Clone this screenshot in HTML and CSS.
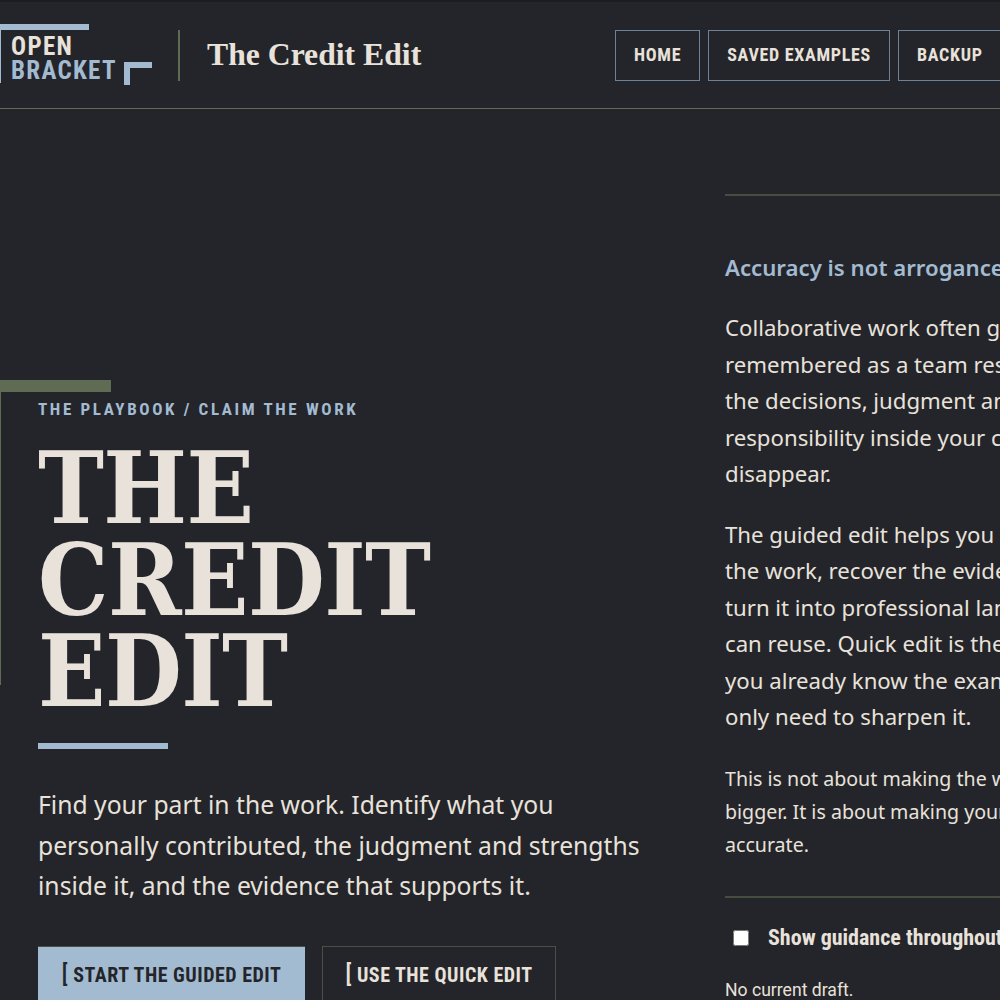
FILE: index.html
```html
<!DOCTYPE html>
<html lang="en">
<head>
  <meta charset="UTF-8">
  <meta name="viewport" content="width=device-width, initial-scale=1.0">
  <title>The Credit Edit</title>
  <link rel="stylesheet" href="styles.css">
</head>
<body>

  <header class="site-header">
    <div class="logo">
      <div class="logo-text">
        <span class="logo-open">OPEN</span>
        <span class="logo-bracket">BRACKET</span>
      </div>
      <span class="logo-corner"></span>
    </div>
    <span class="header-divider"></span>
    <div class="site-title">The Credit Edit</div>
    <nav class="site-nav">
      <a class="nav-link" href="#">HOME</a>
      <a class="nav-link" href="#">SAVED EXAMPLES</a>
      <a class="nav-link" href="#">BACKUP</a>
    </nav>
  </header>

  <main class="layout">
    <section class="hero">
      <div class="hero-inner">
        <div class="eyebrow">THE PLAYBOOK / CLAIM THE WORK</div>
        <h1>THE<br>CREDIT<br>EDIT</h1>
        <div class="hero-rule"></div>
        <p class="lead">Find your part in the work. Identify what you<br>personally contributed, the judgment and strengths<br>inside it, and the evidence that supports it.</p>
        <div class="hero-actions">
          <a class="btn btn-primary" href="#"><span class="btn-mark">[</span> START THE GUIDED EDIT</a>
          <a class="btn btn-secondary" href="#"><span class="btn-mark">[</span> USE THE QUICK EDIT</a>
        </div>
      </div>
    </section>

    <aside class="intro">
      <h2>Accuracy is not arrogance.</h2>
      <p>Collaborative work often gets<br>remembered as a team result, but<br>the decisions, judgment and<br>responsibility inside your contribution<br>disappear.</p>
      <p>The guided edit helps you look at<br>the work, recover the evidence and<br>turn it into professional language you<br>can reuse. Quick edit is there when<br>you already know the example and<br>only need to sharpen it.</p>
      <p class="note">This is not about making the work<br>bigger. It is about making your part<br>accurate.</p>
      <div class="guidance">
        <label class="guidance-label"><input type="checkbox"> Show guidance throughout</label>
        <div class="draft-status">No current draft.</div>
      </div>
    </aside>
  </main>

</body>
</html>
```

FILE: styles.css
```css
html, body {
  margin: 0;
  height: 1000px;
  overflow: hidden;
}

body {
  width: 1000px;
  background-color: #24252b;
  color: #e8e2da;
  font-family: "Noto Sans", Arial, sans-serif;
  border-top: 2px solid #1c1d21;
  box-sizing: border-box;
}

a {
  text-decoration: none;
  color: inherit;
}

/* Header */
.site-header {
  display: flex;
  align-items: center;
  height: 106px;
  border-bottom: 1px solid #5f6b52;
}

.logo {
  position: relative;
  width: 152px;
  height: 62px;
  flex: none;
}

.logo-text {
  box-sizing: border-box;
  width: 89px;
  height: 59px;
  border-top: 6px solid #a3bbd0;
  border-left: 1px solid #a3bbd0;
  padding: 5px 0 0 10px;
  font-family: Roboto, Arial, sans-serif;
  font-stretch: 75%;
  font-weight: 700;
  font-size: 25px;
  line-height: 24px;
  letter-spacing: 1.3px;
}

.logo-open,
.logo-bracket {
  display: block;
}

.logo-bracket {
  color: #a3bbd0;
  white-space: nowrap;
}

.logo-corner {
  position: absolute;
  left: 124px;
  top: 38px;
  width: 22px;
  height: 17px;
  border-top: 6px solid #a3bbd0;
  border-left: 6px solid #a3bbd0;
}

.header-divider {
  width: 2px;
  height: 51px;
  margin-left: 26px;
  background-color: #5f6b52;
  flex: none;
}

.site-title {
  margin-left: 27px;
  font-family: "Liberation Serif", serif;
  font-weight: bold;
  font-size: 31.7px;
  white-space: nowrap;
}

.site-nav {
  display: flex;
  gap: 8px;
  margin-left: auto;
  flex: none;
  width: 385px;
}

.nav-link {
  display: flex;
  align-items: center;
  box-sizing: border-box;
  height: 51px;
  padding: 0 18px 2px;
  border: 1px solid #6d8197;
  font-family: Roboto, Arial, sans-serif;
  font-stretch: 75%;
  font-weight: 700;
  font-size: 18px;
  letter-spacing: 0.7px;
  flex: none;
}

/* Main columns */
.layout {
  display: flex;
}

.hero {
  width: 725px;
  flex: none;
  padding-top: 271px;
}

.hero-inner {
  position: relative;
  padding: 19px 0 0 38px;
}

.hero-inner::before {
  content: "";
  position: absolute;
  left: 0;
  top: 0;
  width: 111px;
  height: 12px;
  background-color: #5f6b52;
}

.hero-inner::after {
  content: "";
  position: absolute;
  left: 0;
  top: 12px;
  width: 1px;
  height: 293px;
  background-color: #5f6b52;
}

.eyebrow {
  font-family: Roboto, Arial, sans-serif;
  font-stretch: 75%;
  font-weight: 700;
  font-size: 17px;
  line-height: 20px;
  letter-spacing: 2.64px;
  color: #a3bbd0;
}

h1 {
  margin: 24px 0 0;
  font-family: "DejaVu Serif", serif;
  font-stretch: 75%;
  font-weight: bold;
  font-size: 98.5px;
  line-height: 91.5px;
  letter-spacing: -0.6px;
  color: #e8e2da;
}

.hero-rule {
  width: 130px;
  height: 6px;
  margin-top: 25px;
  background-color: #a3bbd0;
}

.lead {
  margin: 36.4px 0 0;
  font-size: 24.7px;
  line-height: 40.7px;
  white-space: nowrap;
}

.hero-actions {
  display: flex;
  gap: 17px;
  margin-top: 38.6px;
}

.btn {
  display: flex;
  align-items: center;
  justify-content: center;
  box-sizing: border-box;
  height: 58px;
  font-family: Roboto, Arial, sans-serif;
  font-stretch: 75%;
  font-weight: 700;
  font-size: 20px;
  letter-spacing: 0.5px;
  white-space: pre;
}

.btn-mark {
  font-size: 23px;
  font-weight: 500;
  line-height: 20px;
}

.btn-primary {
  width: 267px;
  border-top: 1px solid #4a5044;
  background-color: #a3bbd0;
  color: #24252b;
}

.btn-secondary {
  width: 234px;
  border: 1px solid #4a5044;
}

/* Right column */
.intro {
  width: 475px;
  flex: none;
  margin-top: 85px;
  border-top: 2px solid #454c40;
  padding-top: 54px;
  font-size: 22.2px;
  line-height: 36.5px;
  white-space: nowrap;
}

.intro h2 {
  margin: 0;
  font-size: 22.2px;
  font-weight: 600;
  line-height: 36px;
  color: #a3bbd0;
}

.intro p {
  margin: 24px 0 0;
}

.intro .note {
  margin-top: 26px;
  font-size: 19.6px;
  line-height: 33px;
}

.guidance {
  margin-top: 35px;
  border-top: 2px solid #454c40;
  padding: 22px 0 0;
}

.guidance-label {
  display: flex;
  align-items: center;
  gap: 19px;
  padding-left: 8px;
  font-family: Roboto, Arial, sans-serif;
  font-stretch: 75%;
  font-weight: 700;
  font-size: 22px;
  line-height: 36px;
}

.guidance-label input {
  width: 16px;
  height: 16px;
  margin: 0;
}

.draft-status {
  margin-top: 24px;
  font-family: Roboto, Arial, sans-serif;
  font-size: 17.6px;
  line-height: 20px;
}
```
